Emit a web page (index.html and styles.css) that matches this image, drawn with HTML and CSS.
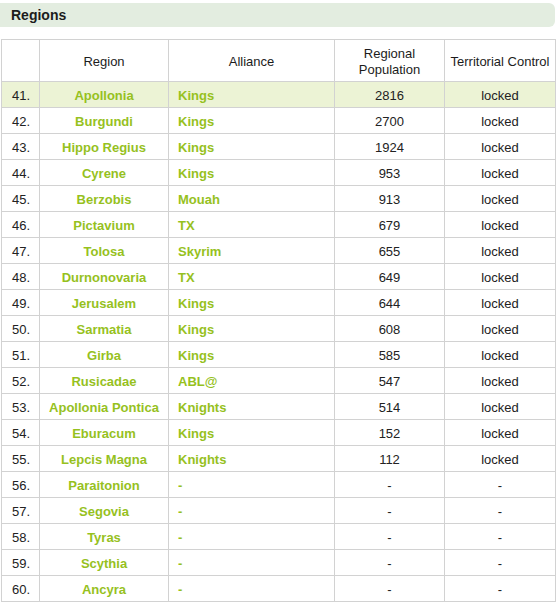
FILE: index.html
```html
<!DOCTYPE html>
<html>
<head>
<meta charset="utf-8">
<link rel="stylesheet" href="styles.css">
</head>
<body>
<div class="bar"><h2 class="bar-title">Regions</h2></div>
<table class="regions">
<colgroup>
<col class="c-num"><col class="c-region"><col class="c-alliance"><col class="c-pop"><col class="c-ctrl">
</colgroup>
<thead>
<tr><th></th><th>Region</th><th>Alliance</th><th>Regional<br>Population</th><th>Territorial Control</th></tr>
</thead>
<tbody>
<tr class="hl"><td class="num">41.</td><td class="region">Apollonia</td><td class="ally">Kings</td><td class="pop">2816</td><td class="ctrl">locked</td></tr>
<tr><td class="num">42.</td><td class="region">Burgundi</td><td class="ally">Kings</td><td class="pop">2700</td><td class="ctrl">locked</td></tr>
<tr><td class="num">43.</td><td class="region">Hippo Regius</td><td class="ally">Kings</td><td class="pop">1924</td><td class="ctrl">locked</td></tr>
<tr><td class="num">44.</td><td class="region">Cyrene</td><td class="ally">Kings</td><td class="pop">953</td><td class="ctrl">locked</td></tr>
<tr><td class="num">45.</td><td class="region">Berzobis</td><td class="ally">Mouah</td><td class="pop">913</td><td class="ctrl">locked</td></tr>
<tr><td class="num">46.</td><td class="region">Pictavium</td><td class="ally">TX</td><td class="pop">679</td><td class="ctrl">locked</td></tr>
<tr><td class="num">47.</td><td class="region">Tolosa</td><td class="ally">Skyrim</td><td class="pop">655</td><td class="ctrl">locked</td></tr>
<tr><td class="num">48.</td><td class="region">Durnonovaria</td><td class="ally">TX</td><td class="pop">649</td><td class="ctrl">locked</td></tr>
<tr><td class="num">49.</td><td class="region">Jerusalem</td><td class="ally">Kings</td><td class="pop">644</td><td class="ctrl">locked</td></tr>
<tr><td class="num">50.</td><td class="region">Sarmatia</td><td class="ally">Kings</td><td class="pop">608</td><td class="ctrl">locked</td></tr>
<tr><td class="num">51.</td><td class="region">Girba</td><td class="ally">Kings</td><td class="pop">585</td><td class="ctrl">locked</td></tr>
<tr><td class="num">52.</td><td class="region">Rusicadae</td><td class="ally">ABL@</td><td class="pop">547</td><td class="ctrl">locked</td></tr>
<tr><td class="num">53.</td><td class="region">Apollonia Pontica</td><td class="ally">Knights</td><td class="pop">514</td><td class="ctrl">locked</td></tr>
<tr><td class="num">54.</td><td class="region">Eburacum</td><td class="ally">Kings</td><td class="pop">152</td><td class="ctrl">locked</td></tr>
<tr><td class="num">55.</td><td class="region">Lepcis Magna</td><td class="ally">Knights</td><td class="pop">112</td><td class="ctrl">locked</td></tr>
<tr><td class="num">56.</td><td class="region">Paraitonion</td><td class="ally">-</td><td class="pop">-</td><td class="ctrl">-</td></tr>
<tr><td class="num">57.</td><td class="region">Segovia</td><td class="ally">-</td><td class="pop">-</td><td class="ctrl">-</td></tr>
<tr><td class="num">58.</td><td class="region">Tyras</td><td class="ally">-</td><td class="pop">-</td><td class="ctrl">-</td></tr>
<tr><td class="num">59.</td><td class="region">Scythia</td><td class="ally">-</td><td class="pop">-</td><td class="ctrl">-</td></tr>
<tr><td class="num">60.</td><td class="region">Ancyra</td><td class="ally">-</td><td class="pop">-</td><td class="ctrl">-</td></tr>
</tbody>
</table>
</body>
</html>
```
FILE: styles.css
```css
html, body {
  margin: 0;
  padding: 0;
  background: #ffffff;
}
body {
  font-family: "Liberation Sans", Arial, sans-serif;
  font-size: 13px;
  color: #222;
}
.bar {
  margin-top: 3px;
  width: 555px;
  height: 24px;
  background: #e3ede0;
  border-radius: 0 6px 6px 0;
  display: flex;
  align-items: center;
}
.bar-title {
  margin: 0 0 0 11px;
  font-size: 14px;
  font-weight: bold;
  color: #1c1c1c;
}
.regions {
  margin: 12px 0 0 1px;
  border-collapse: collapse;
  table-layout: fixed;
  width: 554px;
}
.c-num { width: 38px; }
.c-region { width: 129px; }
.c-alliance { width: 166px; }
.c-pop { width: 110px; }
.c-ctrl { width: 111px; }
.regions th, .regions td {
  border: 1px solid #d2d2d2;
  padding: 2px 0 0 0;
}
.regions th {
  font-weight: normal;
  height: 39px;
  text-align: center;
  line-height: 16px;
  color: #1c1c1c;
}
.regions td {
  height: 23px;
  line-height: 15px;
}
.regions tr.hl td {
  background: #ecf3d5;
}
.num {
  padding-left: 10px !important;
  color: #222;
}
.region {
  text-align: center;
  font-weight: bold;
  color: #96c11e;
}
.ally {
  padding-left: 9px !important;
  font-weight: bold;
  color: #96c11e;
}
.pop, .ctrl {
  text-align: center;
  color: #222;
}
```
